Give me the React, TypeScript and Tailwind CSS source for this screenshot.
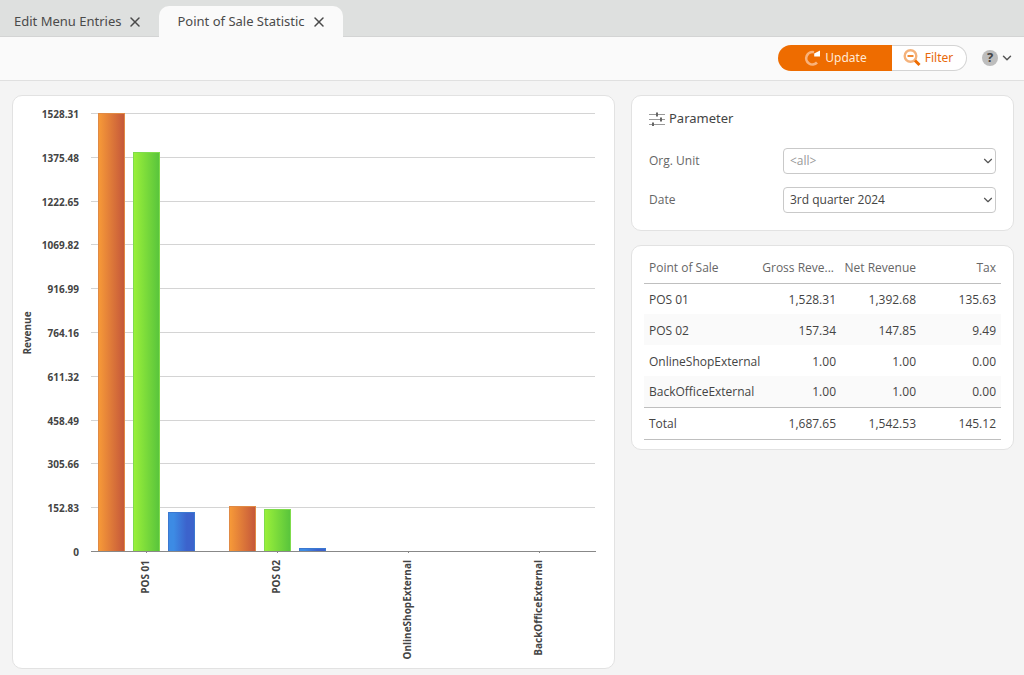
import { useState } from 'react'
import { X, ChevronDown } from 'lucide-react'

const tabs = [
  { id: 'menu', title: 'Edit Menu Entries' },
  { id: 'pos', title: 'Point of Sale Statistic' },
]

const rows = [
  { name: 'POS 01', gross: 1528.31, net: 1392.68, tax: 135.63 },
  { name: 'POS 02', gross: 157.34, net: 147.85, tax: 9.49 },
  { name: 'OnlineShopExternal', gross: 1, net: 1, tax: 0 },
  { name: 'BackOfficeExternal', gross: 1, net: 1, tax: 0 },
]

const total = { gross: 1687.65, net: 1542.53, tax: 145.12 }

const ticks = ['0', '152.83', '305.66', '458.49', '611.32', '764.16', '916.99', '1069.82', '1222.65', '1375.48', '1528.31']

const money = (n: number) =>
  n.toLocaleString('en-US', { minimumFractionDigits: 2, maximumFractionDigits: 2 })

// plot area in chart units
const LEFT = 78
const RIGHT = 582
const BASE = 456
const HEIGHT = 438
const MAX = 1528.31
const GROUP = 131

function RevenueChart() {
  return (
    <svg viewBox="0 0 601 572" className="block w-full" role="img" aria-label="Revenue by point of sale">
      <defs>
        <linearGradient id="gross">
          <stop offset="0" stopColor="#f79a38" />
          <stop offset="1" stopColor="#c4573a" />
        </linearGradient>
        <linearGradient id="net">
          <stop offset="0" stopColor="#9bf03a" />
          <stop offset="1" stopColor="#58c43c" />
        </linearGradient>
        <linearGradient id="tax">
          <stop offset="0.2" stopColor="#3d8be4" />
          <stop offset="0.7" stopColor="#3c63cc" />
        </linearGradient>
      </defs>

      <g className="fill-[#444] font-['Open_Sans',sans-serif] text-[10px] font-bold">
        {ticks.map((tick, i) => {
          const y = Math.round(BASE - (i * HEIGHT) / 10)
          return (
            <g key={tick}>
              {i > 0 && <path d={`M${LEFT} ${y - 0.5}H${RIGHT}`} stroke="#d4d4d4" />}
              <text x="66" y={y + 4} textAnchor="end">
                {tick}
              </text>
            </g>
          )
        })}
        <text transform="translate(18 237) rotate(-90)" textAnchor="middle">
          Revenue
        </text>

        {rows.map((row, i) => {
          const start = 85 + i * GROUP
          const bars = [
            { value: row.gross, fill: 'url(#gross)', stroke: '#e08a45' },
            { value: row.net, fill: 'url(#net)', stroke: '#7fdc4c' },
            { value: row.tax, fill: 'url(#tax)', stroke: '#3b78d0' },
          ]
          return (
            <g key={row.name}>
              {bars.map((bar, j) => {
                const h = Math.round((bar.value / MAX) * HEIGHT)
                return (
                  h > 0 && (
                    <rect
                      key={bar.fill}
                      x={start + j * 35 + 0.5}
                      y={BASE - h - 0.5}
                      width="26"
                      height={h}
                      fill={bar.fill}
                      stroke={bar.stroke}
                    />
                  )
                )
              })}
              <path d={`M${start + 48.5} ${BASE}v1`} stroke="#888" />
              <text transform={`translate(${start + 51} 464) rotate(-90)`} textAnchor="end">
                {row.name}
              </text>
            </g>
          )
        })}
      </g>
      <path d={`M${LEFT} ${BASE - 0.5}H${RIGHT + 1}`} stroke="#888" />
    </svg>
  )
}

function UpdateIcon() {
  return (
    <svg viewBox="0 0 18 18" className="size-[18px]" fill="none">
      <path d="M11 3.300A6.200 6.200 0 1 0 14 13.500" stroke="#f9b27a" strokeWidth="2.600" />
      <path d="M17 1.500V7.500H11.200V4.500Z" fill="#fff" />
    </svg>
  )
}

function FilterIcon() {
  return (
    <svg viewBox="0 0 18 18" className="size-[18px]" fill="none">
      <circle cx="7.500" cy="7" r="5.800" stroke="#f5b27a" strokeWidth="2.400" />
      <path d="M4.500 7h6" stroke="#ee6c00" strokeWidth="1.600" />
      <path d="M12 11.500l4.500 4.500" stroke="#ee6c00" strokeWidth="3" />
    </svg>
  )
}

function SlidersIcon() {
  return (
    <svg viewBox="0 0 16 14" className="h-[14px] w-4" fill="none" stroke="#999">
      <path d="M0 2.500h16M0 7.500h16M0 12.500h16" />
      <path d="M8 0.500v4M12 5.500v4M4 10.500v4" stroke="#666" strokeWidth="2" />
    </svg>
  )
}

function Select({ id, label, value, muted }: { id: string; label: string; value: string; muted?: boolean }) {
  return (
    <div className="flex items-center">
      <label htmlFor={id} className="w-[134px] shrink-0 text-[#666]">
        {label}
      </label>
      <div className="relative grow">
        <select
          id={id}
          className={`block h-[26px] w-full appearance-none rounded border border-[#c9c9c9] bg-white pr-6 pl-1.5 ${
            muted ? 'text-[#999]' : 'text-[#444]'
          }`}
        >
          <option>{value}</option>
        </select>
        <ChevronDown className="pointer-events-none absolute top-1.5 right-px size-[14px] text-[#555]" />
      </div>
    </div>
  )
}

export default function App() {
  const [active, setActive] = useState('pos')

  return (
    <div className="min-h-screen bg-[#f4f4f4] font-['Noto_Sans','Open_Sans',sans-serif] text-xs text-[#444]">
      <header className="flex h-[37px] items-end border-b border-[#d3d4d4] bg-[#dee0df]">
        {tabs.map((tab) => (
          <div
            key={tab.id}
            className={`-mb-px flex h-[31px] items-center gap-1.5 text-[13px] text-[#4a4a4a] ${
              active === tab.id ? 'rounded-t-[10px] bg-[#fafafa] pr-4 pl-[18px]' : 'pr-4 pl-[14px]'
            }`}
          >
            <button onClick={() => setActive(tab.id)}>{tab.title}</button>
            <button aria-label={`Close ${tab.title}`}>
              <X className="size-4" strokeWidth={2.25} />
            </button>
          </div>
        ))}
      </header>

      <div className="flex h-11 items-center justify-end border-b border-[#e0e0e0] bg-[#fafafa] pr-2.5 pb-px">
        <button className="flex h-[26px] w-[114px] items-center justify-center gap-1 rounded-l-full bg-[#ee6c00] text-[#ffe9d6]">
          <UpdateIcon />
          Update
        </button>
        <button className="flex h-[26px] w-[75px] items-center justify-center gap-1 rounded-r-full border border-l-0 border-[#d4d4d4] bg-white pr-0.5 text-[#e8690b]">
          <FilterIcon />
          Filter
        </button>
        <button aria-label="Help" className="ml-[15px] flex items-center gap-0.5">
          <span className="flex size-4 items-center justify-center rounded-full bg-[#bdbdbd] text-[13px] font-bold">?</span>
          <ChevronDown className="size-[14px] text-[#555]" strokeWidth={2.5} />
        </button>
      </div>

      <main className="grid grid-cols-[minmax(0,1fr)_383px] items-start gap-4 pt-[14px] pr-2.5 pl-3">
        <section className="rounded-[10px] border border-[#e2e2e2] bg-white">
          <RevenueChart />
        </section>

        <div className="flex flex-col gap-[14px] font-['Open_Sans',sans-serif]">
          <section className="rounded-[10px] border border-[#e2e2e2] bg-white px-[17px] pt-[13px] pb-[17px]">
            <h2 className="flex h-5 items-center gap-1 font-['Noto_Sans',sans-serif] text-[13px]">
              <SlidersIcon />
              Parameter
            </h2>
            <div className="mt-[19px] flex flex-col gap-[13px]">
              <Select id="unit" label="Org. Unit" value="<all>" muted />
              <Select id="date" label="Date" value="3rd quarter 2024" />
            </div>
          </section>

          <section className="rounded-[10px] border border-[#e2e2e2] bg-white px-3 pt-[3px] pb-[9px]">
            <table className="w-full table-fixed text-right">
              <thead>
                <tr className="h-[34px] border-b border-[#bfbfbf] text-[#666]">
                  <th className="w-[115px] pt-1 pl-[5px] text-left font-normal">Point of Sale</th>
                  <th className="pt-1 pr-1.5 font-normal whitespace-nowrap" title="Gross Revenue">Gross Reve...</th>
                  <th className="w-20 pt-1 pr-1 font-normal">Net Revenue</th>
                  <th className="w-[81px] pt-1 pr-[5px] font-normal">Tax</th>
                </tr>
              </thead>
              <tbody>
                {rows.map((row) => (
                  <tr key={row.name} className="h-[31px] even:bg-[#fafafa]">
                    <td className="pt-0.5 pl-[5px] text-left">{row.name}</td>
                    <td className="pt-0.5 pr-1">{money(row.gross)}</td>
                    <td className="pt-0.5 pr-1">{money(row.net)}</td>
                    <td className="pt-0.5 pr-[5px]">{money(row.tax)}</td>
                  </tr>
                ))}
              </tbody>
              <tfoot>
                <tr className="h-8 border-y border-[#bfbfbf]">
                  <td className="pt-0.5 pl-[5px] text-left">Total</td>
                  <td className="pt-0.5 pr-1">{money(total.gross)}</td>
                  <td className="pt-0.5 pr-1">{money(total.net)}</td>
                  <td className="pt-0.5 pr-[5px]">{money(total.tax)}</td>
                </tr>
              </tfoot>
            </table>
          </section>
        </div>
      </main>
    </div>
  )
}
